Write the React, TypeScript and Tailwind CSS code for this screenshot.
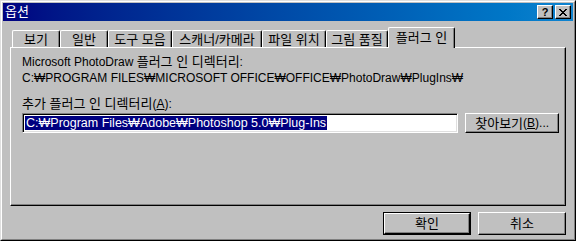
import React from 'react';

const FONT = "font-[family-name:'Liberation_Sans','Noto_Sans_CJK_KR',sans-serif]";

const tabs = [
    { label: '보기', w: 'w-[48px]' },
    { label: '일반', w: 'w-[48px]' },
    { label: '도구 모음', w: 'w-[64px]' },
    { label: '스캐너/카메라', w: 'w-[90px]' },
    { label: '파일 위치', w: 'w-[64px]' },
    { label: '그림 품질', w: 'w-[62px]' },
];

// Korean runs a touch larger so they read like the bitmap Gulim
const K: React.FC<{ children: React.ReactNode }> = ({ children }) => (
    <span className="text-[13px]">{children}</span>
);

const Tab: React.FC<{ label: string; w: string; active?: boolean }> = ({ label, w, active }) => {
    if (active) {
        return (
            <div className={`relative z-10 ${w} h-[21px] -mb-px bg-[#c0c0c0] border-t border-l border-r border-t-white border-l-white border-r-black rounded-tl-[2px] rounded-tr-[2px] shadow-[inset_-1px_0_0_#808080] flex justify-center pt-[2px] text-[13px] leading-[15px] text-black`}>
                {label}
            </div>
        );
    }
    return (
        <div className={`${w} h-[17px] bg-[#c0c0c0] border-t border-l border-r border-t-white border-l-white border-r-black rounded-tl-[2px] rounded-tr-[2px] shadow-[inset_-1px_0_0_#808080] flex justify-center pt-px text-[13px] leading-[15px] text-black`}>
            {label}
        </div>
    );
};

const CaptionButton: React.FC<{ children: React.ReactNode }> = ({ children }) => (
    <div className="w-[16px] h-[14px] bg-[#c0c0c0] border border-t-white border-l-white border-r-black border-b-black shadow-[inset_-1px_-1px_0_#808080] flex items-center justify-center text-black">
        {children}
    </div>
);

export default function App() {
    return (
        <div className={`w-[576px] h-[241px] bg-[#c0c0c0] border border-t-[#dfdfdf] border-l-[#dfdfdf] border-r-black border-b-black ${FONT}`}>
            <div className="w-full h-full border border-t-white border-l-white border-r-[#808080] border-b-[#808080] p-px flex flex-col">
                {/* Title bar */}
                <div className="h-[18px] bg-linear-to-r from-[#000080] to-[#1084d0] flex items-center justify-between pl-[2px] pr-[2px]">
                    <span className="text-white text-[13px] leading-[14px]">옵션</span>
                    <div className="flex gap-[2px]">
                        <CaptionButton>
                            <span className="text-[11px] font-bold leading-none">?</span>
                        </CaptionButton>
                        <CaptionButton>
                            <svg width="8" height="7" viewBox="0 0 8 7" shapeRendering="crispEdges">
                                <path d="M0 0h2v1h1v1h2v-1h1v-1h2v1h-1v1h-1v1h-1v1h1v1h1v1h1v1h-2v-1h-1v-1h-2v1h-1v1h-2v-1h1v-1h1v-1h1v-1h-1v-1h-1v-1h-1z" fill="#000" />
                            </svg>
                        </CaptionButton>
                    </div>
                </div>

                {/* Body */}
                <div className="flex-1 pt-[6px] px-[7px]">
                    {/* Tab strip */}
                    <div className="h-[20px] flex items-end pl-[2px]">
                        {tabs.map(t => (
                            <Tab key={t.label} label={t.label} w={t.w} />
                        ))}
                        <Tab label="플러그 인" w="w-[67px]" active />
                    </div>

                    {/* Panel */}
                    <div className="h-[159px] border border-t-white border-l-white border-r-black border-b-black shadow-[inset_-1px_-1px_0_#808080] pt-[6px] pl-[11px] pr-[6px] text-[12px] leading-[16px] text-black">
                        <div>Microsoft PhotoDraw <K>플러그 인 디렉터리</K>:</div>
                        <div>C:₩PROGRAM FILES₩MICROSOFT OFFICE₩OFFICE₩PhotoDraw₩PlugIns₩</div>

                        <div className="mt-[10px]">
                            <K>추가 플러그 인 디렉터리</K>(<span className="underline">A</span>):
                        </div>
                        <div className="flex items-center mt-px">
                            <div className="w-[438px] h-[20px] bg-white border border-t-[#808080] border-l-[#808080] border-r-white border-b-white shadow-[inset_1px_1px_0_#000,inset_-1px_-1px_0_#dfdfdf] flex items-center pl-[2px]">
                                <span className="bg-[#000080] text-white text-[12.5px] leading-[14px] px-px">
                                    C:₩Program Files₩Adobe₩Photoshop 5.0₩Plug-Ins
                                </span>
                            </div>
                            <button className="ml-[7px] w-[94px] h-[20px] bg-[#c0c0c0] border border-t-white border-l-white border-r-black border-b-black shadow-[inset_-1px_-1px_0_#808080] flex items-center justify-center text-[12px] leading-none">
                                <K>찾아보기</K>(<span className="underline">B</span>)...
                            </button>
                        </div>
                    </div>

                    {/* Buttons */}
                    <div className="flex justify-end gap-[7px] pt-[6px]">
                        <button className="w-[88px] h-[23px] border border-black bg-[#c0c0c0] flex">
                            <div className="flex-1 border border-t-white border-l-white border-r-black border-b-black shadow-[inset_-1px_-1px_0_#808080] flex items-center justify-center text-[13px] leading-none">
                                확인
                            </div>
                        </button>
                        <button className="w-[88px] h-[23px] bg-[#c0c0c0] border border-t-white border-l-white border-r-black border-b-black shadow-[inset_-1px_-1px_0_#808080] flex items-center justify-center text-[13px] leading-none">
                            취소
                        </button>
                    </div>
                </div>
            </div>
        </div>
    );
}
